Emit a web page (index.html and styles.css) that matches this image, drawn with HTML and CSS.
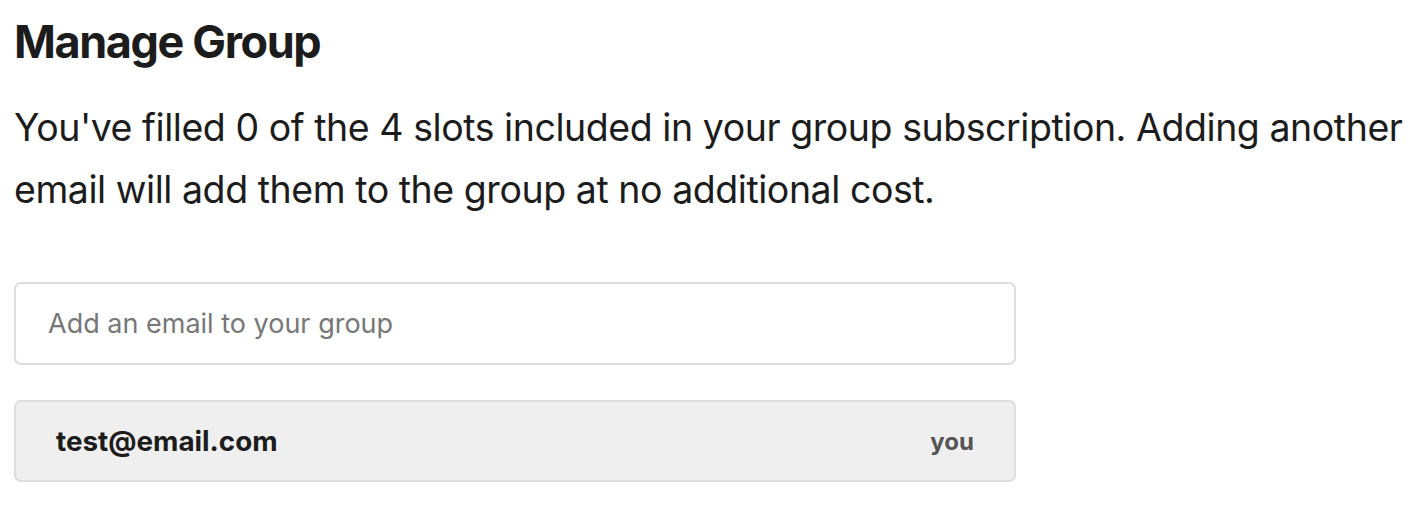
FILE: index.html
```html
<!DOCTYPE html>
<html lang="en">
<head>
  <meta charset="UTF-8">
  <meta name="viewport" content="width=device-width, initial-scale=1.0">
  <title>Manage Group</title>
  <link rel="stylesheet" href="styles.css">
</head>
<body>

<div class="manage-group">
  <h1>Manage Group</h1>
  <p class="intro">You've filled 0 of the 4 slots included in your group subscription. Adding another email will add them to the group at no additional cost.</p>

  <form class="add-form">
    <input type="email" class="email-input" placeholder="Add an email to your group" autofocus>
  </form>

  <ul class="members">
    <li class="member">
      <span class="member-email">test@email.com</span>
      <span class="member-tag">you</span>
    </li>
  </ul>
</div>

</body>
</html>
```

FILE: styles.css
```css
body {
  margin: 0;
  padding: 0;
  font-family: Inter, "Noto Sans", sans-serif;
  color: #1c1c1c;
  background-color: #fff;
}
.manage-group {
  padding: 13px 14px;
}
h1 {
  margin: 0;
  font-size: 45px;
  font-weight: 700;
  line-height: 58px;
  letter-spacing: -1.4px;
}
.intro {
  margin: 26px 0 0;
  font-size: 37.5px;
  line-height: 62px;
  letter-spacing: -0.45px;
  max-width: 1400px;
}
.add-form {
  margin-top: 61px;
  width: 1002px;
}
.email-input {
  box-sizing: border-box;
  width: 100%;
  height: 83px;
  padding: 0 32px;
  border: 2px solid #ddd;
  border-radius: 7px;
  font-family: inherit;
  font-size: 27px;
  color: #1c1c1c;
  outline: none;
  caret-color: #1c1c1c;
}
.email-input::placeholder {
  color: #777;
}
.members {
  list-style-type: none;
  margin: 35px 0 0;
  padding: 0;
  width: 1002px;
}
.member {
  box-sizing: border-box;
  height: 82px;
  display: flex;
  align-items: center;
  justify-content: space-between;
  padding: 0 40px;
  background-color: #efefef;
  border: 2px solid #ddd;
  border-radius: 7px;
}
.member-email {
  font-size: 27.8px;
  font-weight: 700;
}
.member-tag {
  font-size: 24px;
  font-weight: 700;
  color: #555;
}
```
